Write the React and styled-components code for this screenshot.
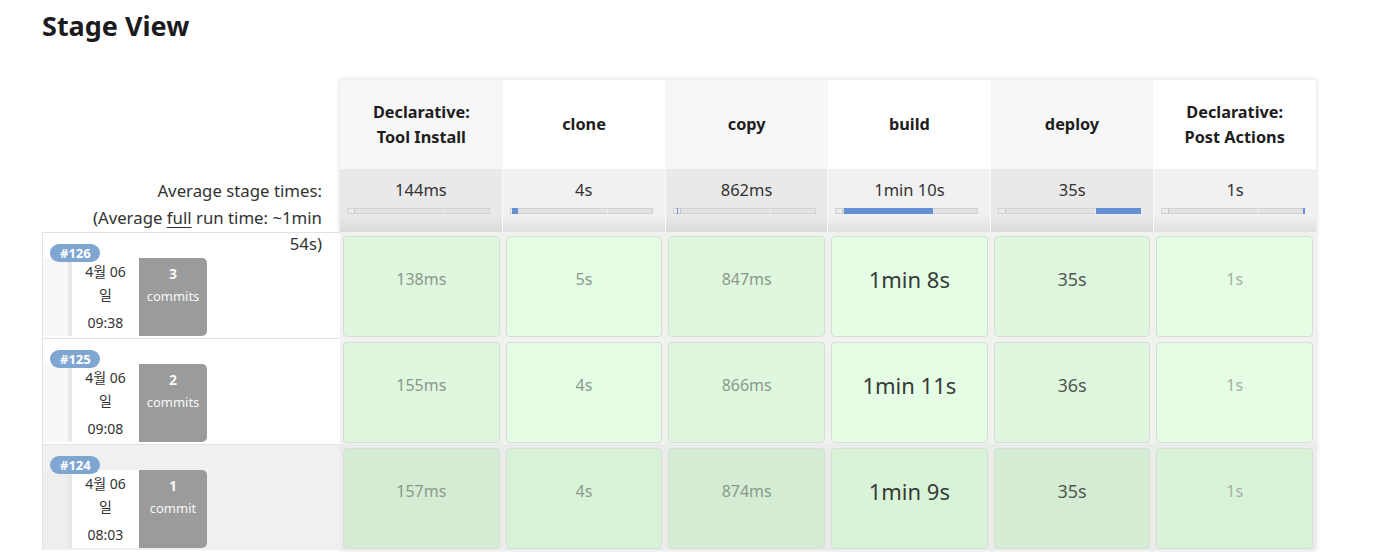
import styled, { createGlobalStyle } from "styled-components";

const GlobalStyle = createGlobalStyle`
  body {
    margin: 0;
    background: #fff;
    font-family: "Noto Sans", "Noto Sans CJK KR", sans-serif;
    color: #333;
  }
`;

const stages = [
  { name: ["Declarative:", "Tool Install"], avg: "144ms", fill: null },
  { name: ["clone"], avg: "4s", fill: [1, 6] },
  { name: ["copy"], avg: "862ms", fill: [3, 1.5] },
  { name: ["build"], avg: "1min 10s", fill: [8, 89] },
  { name: ["deploy"], avg: "35s", fill: [97, 45] },
  { name: ["Declarative:", "Post Actions"], avg: "1s", fill: [141, 2] },
];

const builds = [
  { id: "#126", date: "4월 06일", time: "09:38", commits: "3", label: "commits", times: ["138ms", "5s", "847ms", "1min 8s", "35s", "1s"] },
  { id: "#125", date: "4월 06일", time: "09:08", commits: "2", label: "commits", times: ["155ms", "4s", "866ms", "1min 11s", "36s", "1s"] },
  { id: "#124", date: "4월 06일", time: "08:03", commits: "1", label: "commit", times: ["157ms", "4s", "874ms", "1min 9s", "35s", "1s"], selected: true },
];

// weight of the duration text per stage column
const tone = ["light", "light", "light", "big", "mid", "faint"];

const App = () => {
  return (
    <Page>
      <GlobalStyle />
      <Title>Stage View</Title>
      <Board>
        <Labels>
          <LabelHead />
          <AvgLabel>
            Average stage times:
            <br />
            (Average <u>full</u> run time: ~1min 54s)
          </AvgLabel>
          {builds.map((b) => (
            <BuildCell key={b.id} $selected={b.selected}>
              <Badge>{b.id}</Badge>
              <Gutter $selected={b.selected} />
              <DateBox>
                <DateText>{b.date}</DateText>
                <TimeText>{b.time}</TimeText>
              </DateBox>
              <CommitBox>
                <CommitCount>{b.commits}</CommitCount>
                <CommitLabel>{b.label}</CommitLabel>
              </CommitBox>
            </BuildCell>
          ))}
        </Labels>

        <Stages>
          <StageRow>
            {stages.map((s, i) => (
              <HeadCell key={i} $odd={i % 2 === 0}>
                {s.name.map((line) => (
                  <div key={line}>{line}</div>
                ))}
              </HeadCell>
            ))}
          </StageRow>
          <StageRow>
            {stages.map((s, i) => (
              <AvgCell key={i} $odd={i % 2 === 0}>
                <AvgTime>{s.avg}</AvgTime>
                <Bar>
                  <BarStart />
                  <BarSplit />
                  {s.fill && (
                    <BarFill style={{ left: s.fill[0] + "px", width: s.fill[1] + "px" }} />
                  )}
                </Bar>
              </AvgCell>
            ))}
          </StageRow>
          {builds.map((b) => (
            <BodyRow key={b.id} $selected={b.selected}>
              {b.times.map((t, i) => (
                <BodyCell key={i}>
                  <StageBox $odd={i % 2 === 0} $selected={b.selected}>
                    <Duration $tone={tone[i]}>{t}</Duration>
                  </StageBox>
                </BodyCell>
              ))}
            </BodyRow>
          ))}
        </Stages>
      </Board>
    </Page>
  );
};
export default App;

const Page = styled.div`
  width: 1376px;
  height: 552px;
  overflow: hidden;
`;

const Title = styled.h2`
  margin: 8px 0 0 42px;
  font-size: 27px;
  line-height: 36px;
  font-weight: 700;
  color: #1b1b1f;
`;

const Board = styled.div`
  display: flex;
  margin: 36px 0 0 42px;
`;

const Labels = styled.div`
  width: 298px;
  flex-shrink: 0;
`;

const LabelHead = styled.div`
  height: 89px;
`;

const AvgLabel = styled.div`
  position: relative;
  z-index: 1;
  height: 63px;
  box-sizing: border-box;
  padding: 9px 18px 0 30px;
  text-align: right;
  font-size: 16.8px;
  line-height: 26.5px;
  color: #333;

  u {
    text-underline-offset: 3px;
  }
`;

const BuildCell = styled.div`
  position: relative;
  display: flex;
  height: 106px;
  box-sizing: border-box;
  padding: 25px 0 2px 0;
  border-top: 1px solid #e2e2e2;
  border-left: 1px solid #e2e2e2;
  background: ${(p) => (p.$selected ? "#f0f0f0" : "#fff")};
`;

const Badge = styled.span`
  position: absolute;
  left: 7px;
  top: 11px;
  z-index: 2;
  height: 18px;
  padding: 0 9px 0 10px;
  border-radius: 9px;
  background: #7fa6d1;
  color: #fff;
  font-size: 13px;
  font-weight: 700;
  line-height: 18px;
`;

const Gutter = styled.div`
  width: 25px;
  background: ${(p) => (p.$selected ? "#eeeeee" : "#f8f8f8")};
`;

const DateBox = styled.div`
  width: 67px;
  box-sizing: content-box;
  border-left: 4px solid #e8e8e8;
  background: #fff;
  text-align: center;
  font-size: 14px;
  color: #333;
  padding: 2px 0 0;
`;

const DateText = styled.div`
  line-height: 23px;
  padding: 0 8px;
`;

const TimeText = styled.div`
  margin-top: 5px;
  line-height: 23px;
`;

const CommitBox = styled.div`
  width: 68px;
  background: #9b9b9b;
  border-radius: 0 5px 5px 0;
  color: #f8f8f8;
  text-align: center;
  padding-top: 6px;
`;

const CommitCount = styled.div`
  font-size: 14px;
  font-weight: 700;
  line-height: 20px;
`;

const CommitLabel = styled.div`
  font-size: 13px;
  line-height: 24px;
`;

const Stages = styled.div`
  width: 976px;
  flex-shrink: 0;
  box-shadow: 0 0 5px rgba(0, 0, 0, 0.16);
`;

const StageRow = styled.div`
  display: flex;
`;

const HeadCell = styled.div`
  flex: 1;
  height: 89px;
  display: flex;
  flex-direction: column;
  align-items: center;
  justify-content: center;
  background: ${(p) => (p.$odd ? "#f7f7f7" : "#fff")};
  font-size: 16.3px;
  font-weight: 700;
  line-height: 25px;
  color: #1d1d1d;
  text-align: center;
`;

const AvgCell = styled.div`
  flex: 1;
  height: 63px;
  box-sizing: border-box;
  padding: 10px 0 0 7px;
  border-left: 1px solid #fafafa;
  background: ${(p) =>
    p.$odd
      ? "linear-gradient(to bottom, #e9e9e9 0%, #e9e9e9 74%, #dbdbdb 100%)"
      : "linear-gradient(to bottom, #f1f1f1 0%, #f1f1f1 74%, #e0e0e0 100%)"};

  &:first-child {
    border-left: none;
  }
`;

const AvgTime = styled.div`
  text-align: center;
  padding-right: 7px;
  font-size: 16.5px;
  line-height: 22px;
  color: #333;
`;

const Bar = styled.div`
  position: relative;
  width: 143px;
  height: 6px;
  margin-top: 7px;
  box-sizing: border-box;
  background: #e2e2e2;
  border: 1px solid #d2d2d2;
`;

const BarStart = styled.div`
  position: absolute;
  left: 0;
  top: 0;
  bottom: 0;
  width: 6px;
  background: #ececec;
  border-right: 1px solid #c4c4c4;
`;

const BarSplit = styled.div`
  position: absolute;
  left: 68%;
  top: 0;
  bottom: 0;
  width: 1px;
  background: #f4f4f4;
`;

const BarFill = styled.div`
  position: absolute;
  top: -1px;
  bottom: -1px;
  background: #6590d3;
`;

const BodyRow = styled.div`
  display: flex;
  background: ${(p) => (p.$selected ? "#e9ece9" : "#eff2ef")};
`;

const BodyCell = styled.div`
  flex: 1;
  height: 106px;
  box-sizing: border-box;
  padding: 4px 3px 1px 3px;
`;

const boxColor = (p) => {
  if (p.$selected) return p.$odd ? "#d3ecd3" : "#d9f3d9";
  return p.$odd ? "#dff6df" : "#e5fde5";
};

const StageBox = styled.div`
  height: 100%;
  box-sizing: border-box;
  border: 1px solid #d5ddd5;
  border-radius: 4px;
  background: ${boxColor};
  text-align: center;
  padding-top: 27px;
`;

const toneStyles = {
  light: "font-size: 16px; color: #8b9a8b;",
  faint: "font-size: 16px; color: #a3b0a3;",
  mid: "font-size: 18px; color: #505850;",
  big: "font-size: 22px; color: #353b35;",
};

const Duration = styled.div`
  line-height: 30px;
  ${(p) => toneStyles[p.$tone]}
`;
